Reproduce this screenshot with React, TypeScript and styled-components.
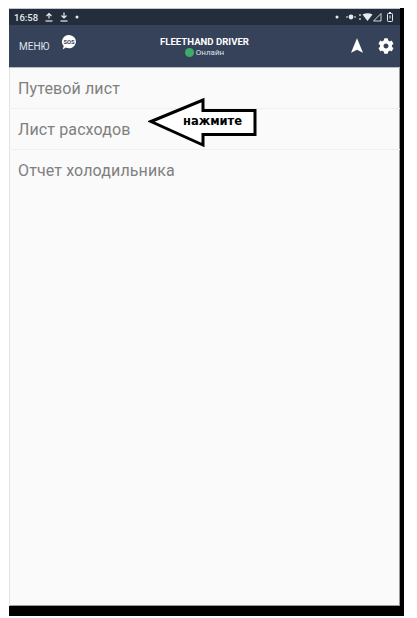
import styled, { createGlobalStyle } from 'styled-components';
import { FaCog } from 'react-icons/fa';

const GlobalStyle = createGlobalStyle`
    html, body {
        margin: 0;
        padding: 0;
        background: #ffffff;
        font-family: Roboto, "Noto Sans", sans-serif;
    }
`;

const Page = styled.div`
    width: 417px;
    height: 618px;
    padding: 8px 0 0 9px;
    box-sizing: border-box;
    overflow: hidden;
`;

const Device = styled.div`
    position: relative;
    width: 391px;
    height: 598px;
    display: flex;
    flex-direction: column;
    background: #fafafa;
    border-right: 4px solid #000;
    border-bottom: 10px solid #000;
    box-shadow: inset 0 1px 0 #c4c8cc, inset -1px 0 0 #9a9a9a, inset 1px 0 0 #e2e2e2, inset 0 -1px 0 #9a9a9a;
    box-sizing: content-box;
`;

const StatusBar = styled.div`
    height: 16px;
    flex: none;
    margin-top: 1px;
    padding: 0 4px 0 5px;
    display: flex;
    align-items: center;
    justify-content: space-between;
    background: #232d3c;
    color: #e8ebee;
    font-size: 9.5px;
    font-weight: 500;
`;

const StatusGroup = styled.div<{ $gap: number }>`
    display: flex;
    align-items: center;
    gap: ${(props) => props.$gap}px;
`;

const Header = styled.header`
    height: 42px;
    flex: none;
    padding: 0 10px;
    display: grid;
    grid-template-columns: 1fr auto 1fr;
    align-items: center;
    background: #36425a;
    border-bottom: 1px solid #b9bdc2;
    color: #fff;
`;

const HeaderLeft = styled.div`
    display: flex;
    align-items: flex-start;
    gap: 11px;
`;

const MenuLabel = styled.span`
    margin-top: 3px;
    font-size: 10px;
    color: #dfe3e6;
`;

const SosSlot = styled.span`
    margin-top: -4px;
`;

const HeaderCenter = styled.div`
    display: flex;
    flex-direction: column;
    align-items: center;
    gap: 1px;
`;

const AppTitle = styled.div`
    font-size: 9.6px;
    font-weight: 700;
`;

const Online = styled.div`
    display: flex;
    align-items: center;
    gap: 2px;
    font-size: 8px;
    color: #dfe3e6;
`;

const OnlineDot = styled.span`
    width: 9px;
    height: 9px;
    border-radius: 50%;
    background: #3dab6c;
`;

const HeaderRight = styled.div`
    margin-right: -4px;
    display: flex;
    justify-content: flex-end;
    align-items: center;
    gap: 15px;
    font-size: 16px;
`;

const NavSlot = styled.span`
    display: flex;
    margin-top: -2px;
`;

const MenuList = styled.ul`
    margin: 0;
    padding: 0;
    list-style: none;
`;

const MenuRow = styled.li`
    height: 41px;
    padding-left: 9px;
    display: flex;
    align-items: center;
    box-sizing: border-box;
    border-bottom: 1px solid #f0f0f0;
    color: #808080;
    font-size: 16px;
    letter-spacing: 0.12px;
    &:last-child {
        border-bottom: none;
    }
`;

const Callout = styled.div`
    position: absolute;
    left: 139px;
    top: 89px;
    width: 110px;
    height: 51px;
`;

const CalloutText = styled.span`
    position: absolute;
    left: 35px;
    top: 17px;
    font-family: "DejaVu Sans", Arial, sans-serif;
    font-size: 11.5px;
    font-weight: 700;
    color: #000;
`;

const SosIcon = () => (
    <svg width="16" height="17" viewBox="0 0 15 16">
        <path d="M7.5 1a6.5 6.2 0 1 1-3 11.7L1.5 14.5l1-3.2A6.5 6.2 0 0 1 7.5 1z" fill="#fff" />
        <text x="7.5" y="9.5" textAnchor="middle" fontSize="5.5" fontWeight="700" fill="#36425a" fontFamily="Roboto, sans-serif">SOS</text>
    </svg>
);

const NavArrow = () => (
    <svg width="12" height="15" viewBox="0 0 14 17">
        <path d="M7 0L14 17 7 13.5 0 17z" fill="#fff" />
    </svg>
);

const UploadIcon = ({ flip }: { flip?: boolean }) => (
    <svg width="8" height="10" viewBox="0 0 8 10">
        <path d={flip ? 'M4 0.5v5M1.5 3.5L4 6l2.5-2.5' : 'M4 6.5v-5M1.5 4L4 1.5 6.5 4'} stroke="#e8ebee" strokeWidth="1.2" fill="none" />
        <path d="M0.5 9h7" stroke="#e8ebee" strokeWidth="1.2" />
    </svg>
);

const SmallDot = () => (
    <svg width="4" height="4" viewBox="0 0 4 4">
        <circle cx="2" cy="2" r="1.5" fill="#e8ebee" />
    </svg>
);

const SystemIcons = () => (
    <svg width="50" height="10" viewBox="0 0 50 10">
        <circle cx="5" cy="5" r="2.4" fill="#e8ebee" />
        <path d="M0 5h2M8 5h2" stroke="#e8ebee" strokeWidth="1" />
        <path d="M14 2v2M14 6v2" stroke="#e8ebee" strokeWidth="1.2" />
        <path d="M16.5 2.5q5-2.5 10 0L21.5 9z" fill="#e8ebee" />
        <path d="M35 1.5v7.5h-7.5z" fill="none" stroke="#e8ebee" strokeWidth="0.9" />
        <rect x="41.5" y="1.5" width="5" height="8" rx="0.8" fill="none" stroke="#e8ebee" strokeWidth="1" />
        <path d="M43 0.5h2M44 3.5v3" stroke="#e8ebee" strokeWidth="1" />
    </svg>
);

const CalloutArrow = () => (
    <svg width="110" height="51" viewBox="0 0 110 51">
        <path d="M3 24.5L55 3v10.5h52v24H55v10.5z" fill="#fff" stroke="#000" strokeWidth="3" strokeLinejoin="miter" />
    </svg>
);

const menuItems = ['Путевой лист', 'Лист расходов', 'Отчет холодильника'];

const App = () => {
    return (
        <Page>
            <GlobalStyle />
            <Device>
                <StatusBar>
                    <StatusGroup $gap={7}>
                        <span>16:58</span>
                        <UploadIcon />
                        <UploadIcon flip />
                        <SmallDot />
                    </StatusGroup>
                    <StatusGroup $gap={7}>
                        <SmallDot />
                        <SystemIcons />
                    </StatusGroup>
                </StatusBar>
                <Header>
                    <HeaderLeft>
                        <MenuLabel>МЕНЮ</MenuLabel>
                        <SosSlot>
                            <SosIcon />
                        </SosSlot>
                    </HeaderLeft>
                    <HeaderCenter>
                        <AppTitle>FLEETHAND DRIVER</AppTitle>
                        <Online>
                            <OnlineDot />
                            Онлайн
                        </Online>
                    </HeaderCenter>
                    <HeaderRight>
                        <NavSlot>
                            <NavArrow />
                        </NavSlot>
                        <FaCog />
                    </HeaderRight>
                </Header>
                <MenuList>
                    {menuItems.map((item) => (
                        <MenuRow key={item}>{item}</MenuRow>
                    ))}
                </MenuList>
                <Callout>
                    <CalloutArrow />
                    <CalloutText>нажмите</CalloutText>
                </Callout>
            </Device>
        </Page>
    );
};

export default App;
